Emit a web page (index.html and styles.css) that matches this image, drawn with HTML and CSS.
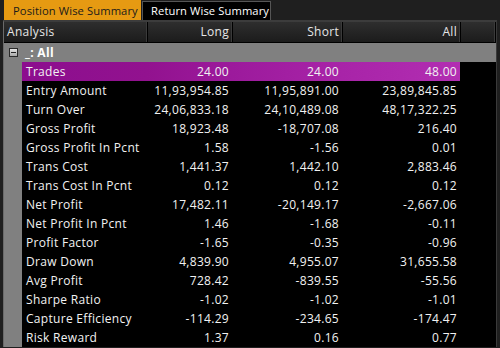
FILE: index.html
```html
<!DOCTYPE html>
<html lang="en">
<head>
    <meta charset="UTF-8">
    <title>Summary</title>
    <link rel="stylesheet" href="styles.css">
</head>
<body>
    <div class="panel">
        <div class="tabs">
            <div class="tab tab-active">Position Wise Summary</div>
            <div class="tab">Return Wise Summary</div>
        </div>

        <div class="grid">
            <!-- Header -->
            <div class="row head">
                <div class="cell c-name">Analysis</div>
                <div class="cell c-num">Long</div>
                <div class="cell c-short">Short</div>
                <div class="cell c-all">All</div>
                <div class="cell c-fill"></div>
            </div>

            <!-- Group -->
            <div class="row group">
                <span class="expander"></span>
                <span class="group-title">_: All</span>
            </div>

            <div class="row data selected">
                <div class="gutter"></div>
                <div class="cell c-label">Trades</div>
                <div class="cell c-num">24.00</div>
                <div class="cell c-short">24.00</div>
                <div class="cell c-all">48.00</div>
            </div>
            <div class="row data">
                <div class="gutter"></div>
                <div class="cell c-label">Entry Amount</div>
                <div class="cell c-num">11,93,954.85</div>
                <div class="cell c-short">11,95,891.00</div>
                <div class="cell c-all">23,89,845.85</div>
            </div>
            <div class="row data">
                <div class="gutter"></div>
                <div class="cell c-label">Turn Over</div>
                <div class="cell c-num">24,06,833.18</div>
                <div class="cell c-short">24,10,489.08</div>
                <div class="cell c-all">48,17,322.25</div>
            </div>
            <div class="row data">
                <div class="gutter"></div>
                <div class="cell c-label">Gross Profit</div>
                <div class="cell c-num">18,923.48</div>
                <div class="cell c-short">-18,707.08</div>
                <div class="cell c-all">216.40</div>
            </div>
            <div class="row data">
                <div class="gutter"></div>
                <div class="cell c-label">Gross Profit In Pcnt</div>
                <div class="cell c-num">1.58</div>
                <div class="cell c-short">-1.56</div>
                <div class="cell c-all">0.01</div>
            </div>
            <div class="row data">
                <div class="gutter"></div>
                <div class="cell c-label">Trans Cost</div>
                <div class="cell c-num">1,441.37</div>
                <div class="cell c-short">1,442.10</div>
                <div class="cell c-all">2,883.46</div>
            </div>
            <div class="row data">
                <div class="gutter"></div>
                <div class="cell c-label">Trans Cost In Pcnt</div>
                <div class="cell c-num">0.12</div>
                <div class="cell c-short">0.12</div>
                <div class="cell c-all">0.12</div>
            </div>
            <div class="row data">
                <div class="gutter"></div>
                <div class="cell c-label">Net Profit</div>
                <div class="cell c-num">17,482.11</div>
                <div class="cell c-short">-20,149.17</div>
                <div class="cell c-all">-2,667.06</div>
            </div>
            <div class="row data">
                <div class="gutter"></div>
                <div class="cell c-label">Net Profit In Pcnt</div>
                <div class="cell c-num">1.46</div>
                <div class="cell c-short">-1.68</div>
                <div class="cell c-all">-0.11</div>
            </div>
            <div class="row data">
                <div class="gutter"></div>
                <div class="cell c-label">Profit Factor</div>
                <div class="cell c-num">-1.65</div>
                <div class="cell c-short">-0.35</div>
                <div class="cell c-all">-0.96</div>
            </div>
            <div class="row data">
                <div class="gutter"></div>
                <div class="cell c-label">Draw Down</div>
                <div class="cell c-num">4,839.90</div>
                <div class="cell c-short">4,955.07</div>
                <div class="cell c-all">31,655.58</div>
            </div>
            <div class="row data">
                <div class="gutter"></div>
                <div class="cell c-label">Avg Profit</div>
                <div class="cell c-num">728.42</div>
                <div class="cell c-short">-839.55</div>
                <div class="cell c-all">-55.56</div>
            </div>
            <div class="row data">
                <div class="gutter"></div>
                <div class="cell c-label">Sharpe Ratio</div>
                <div class="cell c-num">-1.02</div>
                <div class="cell c-short">-1.02</div>
                <div class="cell c-all">-1.01</div>
            </div>
            <div class="row data">
                <div class="gutter"></div>
                <div class="cell c-label">Capture Efficiency</div>
                <div class="cell c-num">-114.29</div>
                <div class="cell c-short">-234.65</div>
                <div class="cell c-all">-174.47</div>
            </div>
            <div class="row data">
                <div class="gutter"></div>
                <div class="cell c-label">Risk Reward</div>
                <div class="cell c-num">1.37</div>
                <div class="cell c-short">0.16</div>
                <div class="cell c-all">0.77</div>
            </div>
        </div>
    </div>
</body>
</html>
```

FILE: styles.css
```css
body {
    margin: 0;
    background-color: #1f1f1f;
    font-family: 'Open Sans', 'Noto Sans', sans-serif;
    font-size: 12px;
    letter-spacing: 0.3px;
    color: #f2f2f2;
    overflow: hidden;
}
.panel {
    width: 500px;
    height: 348px;
    overflow: hidden;
}
.tabs {
    display: flex;
    padding: 0 0 0 4px;
    height: 20px;
    gap: 1px;
}
.tab {
    box-sizing: border-box;
    height: 19px;
    margin-top: 1px;
    width: 129px;
    padding: 0 0 0 8px;
    line-height: 17px;
    font-size: 11.2px;
    letter-spacing: 0.1px;
    background: #000;
    border: 1px solid #555;
    border-bottom: none;
    color: #fff;
    white-space: nowrap;
    overflow: hidden;
}
.tab-active {
    background: #e69a12;
    border-color: #e69a12;
    color: #1a1a1a;
    margin-top: 0;
    height: 20px;
    width: 137px;
    line-height: 19px;
}
.grid {
    margin: 0 0 0 3px;
    width: 492px;
    border-top: 2px solid #3c3c3c;
    border-left: 1px solid #6a6a6a;
    border-right: 1px solid #3a3a3a;
}
.row {
    display: flex;
    height: 19px;
    align-items: center;
    white-space: nowrap;
}
.cell {
    box-sizing: border-box;
    height: 100%;
    line-height: 19px;
}
.head {
    height: 20px;
    background: linear-gradient(180deg, #2e2e2e, #1c1c1c);
    border-bottom: 1px solid #000;
    color: #e6e6e6;
}
.head .cell {
    border-right: 1px solid #000;
    line-height: 20px;
    box-shadow: inset -1px 0 0 #3a3a3a;
}
.head .c-name {
    width: 144px;
    padding-left: 3px;
}
.c-label {
    width: 125px;
    padding-left: 4px;
}
.c-num {
    width: 85px;
    text-align: right;
    padding-right: 3px;
}
.c-short {
    width: 110px;
    text-align: right;
    padding-right: 3px;
}
.c-all {
    width: 118px;
    text-align: right;
    padding-right: 3px;
}
.c-fill {
    flex: 1;
}
.group {
    height: 19px;
    background: #808080;
    color: #fff;
    font-weight: bold;
    gap: 7px;
    padding-left: 5px;
}
.expander {
    box-sizing: border-box;
    width: 9px;
    height: 9px;
    border: 1px solid #2a2a2a;
    background: linear-gradient(180deg, #e4e4e4, #a8a8a8);
    position: relative;
}
.expander::after {
    content: '';
    position: absolute;
    left: 1px;
    right: 1px;
    top: 3px;
    height: 1px;
    background: #222;
}
.data {
    background: #000;
}
.gutter {
    width: 18px;
    height: 100%;
    background: #808080;
}
.selected .c-label {
    background: linear-gradient(90deg, #8c0e8e, #92128f);
}
.selected .c-num {
    background: linear-gradient(90deg, #92128f, #9c1a9c);
}
.selected .c-short {
    background: linear-gradient(90deg, #9c1a9c, #a824a8);
}
.selected .c-all {
    background: linear-gradient(90deg, #a824a8, #b22eb2);
}
```
